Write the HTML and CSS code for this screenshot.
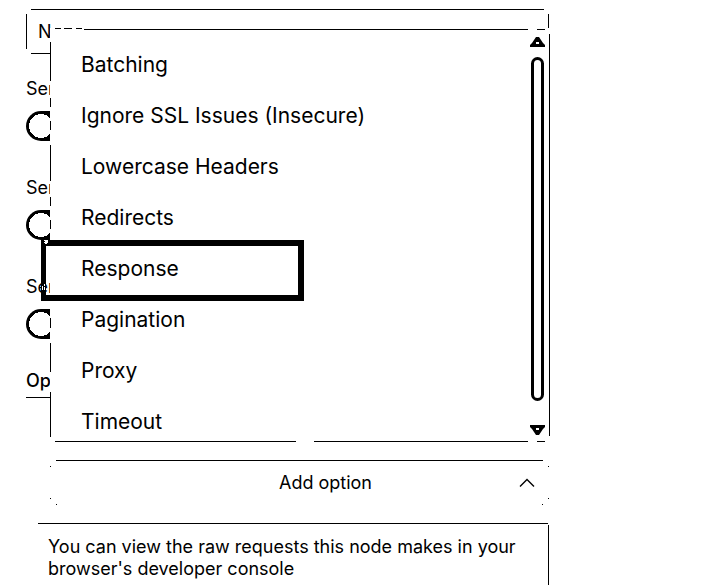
FILE: index.html
```html
<!DOCTYPE html>
<html lang="en">
<head>
<meta charset="utf-8">
<title>Options</title>
<link rel="stylesheet" href="styles.css">
</head>
<body>
<main class="panel">
  <input class="field" type="text" value="N" aria-label="N">
  <div class="switches">
    <div class="switch-row">
      <label class="label" for="s1">Sen</label>
      <input class="switch" type="checkbox" id="s1">
    </div>
    <div class="switch-row">
      <label class="label" for="s2">Sen</label>
      <input class="switch" type="checkbox" id="s2">
    </div>
    <div class="switch-row">
      <label class="label" for="s3">Sen</label>
      <input class="switch" type="checkbox" id="s3">
    </div>
  </div>
  <h2 class="section">Op</h2>
  <div class="picker">
    <div class="menu">
      <ul class="items">
        <li><button class="item">Batching</button></li>
        <li><button class="item">Ignore SSL Issues (Insecure)</button></li>
        <li><button class="item">Lowercase Headers</button></li>
        <li><button class="item">Redirects</button></li>
        <li><button class="item">Response</button></li>
        <li><button class="item">Pagination</button></li>
        <li><button class="item">Proxy</button></li>
        <li><button class="item">Timeout</button></li>
      </ul>
      <div class="scrollbar">
        <svg width="15" height="10" viewBox="0 0 15 10"><path d="M6 0h3l2 3 2 3 2 2v2H0V8l2-2 2-3z"/><path d="M6 5h3v2H6z" fill="#fff"/></svg>
        <div class="thumb"></div>
        <svg width="15" height="10" viewBox="0 0 15 10"><path d="M6 10h3l2-3 2-3 2-2V0H0v2l2 2 2 3z"/><path d="M6 3h3v2H6z" fill="#fff"/></svg>
      </div>
    </div>
    <div class="marker">
      <svg class="marker-art" width="10" height="62" viewBox="0 0 10 62"><path d="M3 0h4v1H3zM3 2h1v-2h3v3h-1v1H4V3H3z" fill="#fff"/><path d="M1 46h1v4H1zM3 44h1v2H3zM3 47h1v3H3z" fill="#fff"/></svg>
    </div>
    <button class="add">
      <span class="add-text">Add option</span>
      <svg width="16" height="10" viewBox="0 0 16 10"><path d="M1 8.500l7-7 7 7" fill="none" stroke="#000" stroke-width="1.400"/></svg>
    </button>
  </div>
  <p class="note">You can view the raw requests this node makes in your browser's developer console</p>
</main>
</body>
</html>
```
FILE: styles.css
```css
* { box-sizing: border-box; }

body {
  margin: 0;
  background: #fff;
  color: #000;
  font-family: Inter, sans-serif;
  font-size: 18px;
  line-height: 22px;
}

button, input { font: inherit; color: inherit; }

.panel {
  --ink: linear-gradient(#000, #000);
  padding: 9px 156px 0 26px;
}

/* Outlines stop short of the corners */
.field {
  display: block;
  width: 100%;
  height: 45px;
  padding: 0 12px;
  border: 0;
  background:
    var(--ink) 5px 0 / calc(100% - 10px) 1px,
    var(--ink) 5px 100% / calc(100% - 10px) 1px,
    var(--ink) 0 5px / 1px 35px,
    var(--ink) 100% 5px / 1px 16px;
  background-repeat: no-repeat;
}

.switches {
  display: flex;
  flex-direction: column;
  gap: 36px;
  margin-top: 24px;
}

.switch-row {
  display: flex;
  flex-direction: column;
  align-items: flex-start;
  gap: 11px;
}

.switch {
  appearance: none;
  width: 56px;
  height: 30px;
  margin: 0;
  border-radius: 15px;
  background: radial-gradient(circle at 15px 15px, #fff 12px, #000 12px);
}

.section {
  margin: 31px 0 0;
  height: 28px;
  font-size: 18px;
  font-weight: 500;
  line-height: 22px;
  background: var(--ink) 0 100% / 100% 1px no-repeat;
}

.picker {
  position: relative;
  margin: 62px 0 0 24px;
}

.menu {
  position: absolute;
  left: 0;
  right: -1px;
  bottom: calc(100% + 18px);
  height: 414px;
  padding: 11px 5px 0 31px;
  display: flex;
  overflow: hidden;
  background:
    var(--ink) 34px 1px / calc(100% - 56px) 1px,
    var(--ink) calc(100% - 5px) 1px / 8px 1px,
    var(--ink) 5px 0 / 6px 1px,
    var(--ink) 14px 0 / 8px 1px,
    var(--ink) 26px 0 / 6px 1px,
    var(--ink) 5px 100% / 241px 1px,
    var(--ink) 100% 6px / 1px 402px,
    var(--ink) 0 14px / 1px 39px,
    var(--ink) 0 70px / 1px 9px,
    var(--ink) 0 93px / 1px 9px,
    var(--ink) 0 117px / 1px 36px,
    var(--ink) 0 169px / 1px 9px,
    var(--ink) 0 192px / 1px 9px,
    var(--ink) 0 290px / 1px 10px,
    var(--ink) 0 315px / 1px 29px,
    var(--ink) 0 364px / 1px 45px,
    var(--ink) calc(100% - 5px) 100% / 8px 1px,
    linear-gradient(to right, transparent 264px, #000 264px, #000 calc(100% - 22px), transparent 0) 0 100% / 100% 1px,
    #fff;
  background-repeat: no-repeat;
}

.items {
  flex: 1;
  margin: 0;
  padding: 0;
  list-style: none;
}

.item {
  display: block;
  width: 100%;
  height: 51px;
  padding: 0;
  border: 0;
  background: none;
  text-align: left;
  font-size: 21px;
}

.scrollbar {
  display: flex;
  flex-direction: column;
  align-items: center;
  gap: 10px;
  margin: -2px 0 7px;
}

.scrollbar svg, .add svg { display: block; flex: none; }

.thumb {
  flex: 1;
  width: 13px;
  margin-bottom: 14px;
  border: 3px solid #000;
  border-radius: 7px;
}

.marker {
  position: absolute;
  left: -9px;
  bottom: calc(100% + 159px);
  width: 263px;
  height: 61px;
  border: 6px solid #000;
  border-left-width: 5px;
  pointer-events: none;
}

.marker-art {
  position: absolute;
  left: -5px;
  top: -6px;
}

.add {
  display: flex;
  align-items: center;
  width: 100%;
  height: 45px;
  padding: 0 14px 0 82px;
  border: 0;
  background:
    var(--ink) 6px 0 / calc(100% - 12px) 1px,
    var(--ink) 0 6px / 1px 1px,
    var(--ink) 0 38px / 1px 1px,
    var(--ink) 6px 100% / 1px 1px,
    var(--ink) 100% 6px / 1px 1px,
    var(--ink) 100% 38px / 1px 1px,
    var(--ink) calc(100% - 6px) 100% / 1px 1px;
  background-repeat: no-repeat;
}

.add-text { flex: 1; }

.note {
  margin: 18px 0 0 12px;
  padding: 13px 11px 5px 10px;
  background:
    var(--ink) 0 0 / calc(100% - 1px) 1px,
    var(--ink) 100% 2px / 1px 100%;
  background-repeat: no-repeat;
}
```
